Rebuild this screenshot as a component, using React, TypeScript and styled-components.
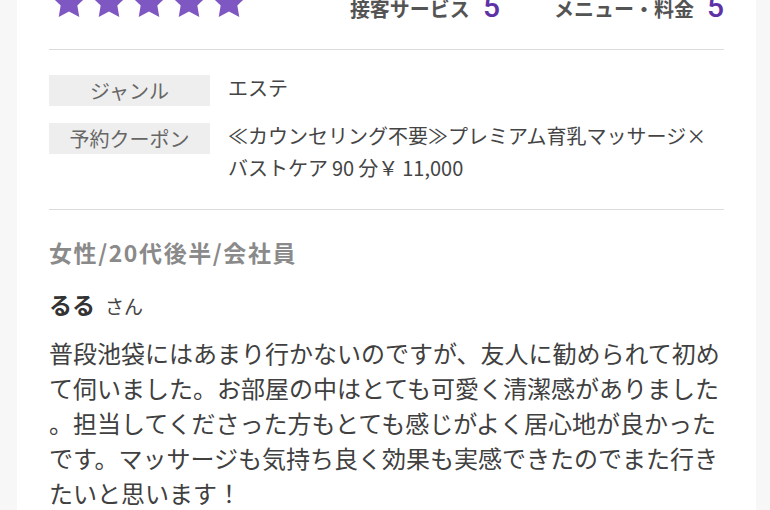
import React from "react";
import styled, { createGlobalStyle } from "styled-components";

const GlobalStyle = createGlobalStyle`
  body {
    margin: 0;
    background: #f7f7f7;
    font-family: "Noto Sans CJK JP", "Noto Sans", sans-serif;
  }
`;

//#region
const Page = styled.div`
  padding: 0 14px 0 17px;
  height: 510px;
  overflow: hidden;
`;

const Card = styled.div`
  background: #fff;
  padding: 0 32px 40px;
  min-height: 100%;
`;

const Header = styled.div`
  display: flex;
  justify-content: space-between;
  align-items: flex-end;
  margin-top: -18px;
  padding-bottom: 27px;
  border-bottom: 1px solid #dcdcdc;
`;

const Stars = styled.div`
  display: flex;
`;

const Ratings = styled.div`
  display: flex;
  gap: 54px;
  margin-bottom: 0;
`;

const Rating = styled.div`
  display: flex;
  align-items: baseline;
  gap: 13px;
`;

const RatingLabel = styled.span`
  font-size: 20px;
  font-weight: 700;
  color: #545454;
  line-height: 1;
`;

const RatingValue = styled.span`
  font-family: "Roboto", "Liberation Sans", sans-serif;
  font-size: 30px;
  font-weight: 500;
  color: #5e31a6;
  line-height: 1;
`;

const InfoTable = styled.div`
  display: grid;
  grid-template-columns: 161px 1fr;
  column-gap: 18px;
  row-gap: 17px;
  padding: 25px 0 25px;
  border-bottom: 1px solid #dcdcdc;
`;

const Label = styled.div`
  background: #eeeeee;
  height: 31px;
  display: flex;
  align-items: center;
  justify-content: center;
  font-size: 20px;
  color: #666;
`;

const Value = styled.div`
  font-size: 20px;
  line-height: 32px;
  color: #444;
  margin-top: -3px;
`;

const Attributes = styled.div`
  margin-top: 26px;
  font-size: 23px;
  font-weight: 700;
  letter-spacing: 1.6px;
  line-height: 32px;
  color: #8a8a8a;
`;

const Name = styled.div`
  margin-top: 20px;
  line-height: 32px;
  color: #333;
`;

const NameMain = styled.span`
  font-size: 23px;
  font-weight: 700;
`;

const Honorific = styled.span`
  font-size: 19px;
  color: #444;
  margin-left: 10px;
`;

const Body = styled.p`
  margin: 12px 0 0;
  font-size: 24px;
  line-height: 35px;
  color: #404040;
  line-break: anywhere;
`;
//#endregion

const Star = () => (
  <svg width="40" height="40" viewBox="0 0 24 24">
    <polygon
      fill="#7f57c2"
      points="12,2 15.09,8.26 22,9.27 17,14.14 18.18,21.02 12,17.77 5.82,21.02 7,14.14 2,9.27 8.91,8.26"
    />
  </svg>
);

const App = () => {
  return (
    <Page>
      <GlobalStyle />
      <Card>
        <Header>
          <Stars>
            {[0, 1, 2, 3, 4].map((i) => (
              <Star key={i} />
            ))}
          </Stars>
          <Ratings>
            <Rating>
              <RatingLabel>接客サービス</RatingLabel>
              <RatingValue>5</RatingValue>
            </Rating>
            <Rating>
              <RatingLabel>メニュー・料金</RatingLabel>
              <RatingValue>5</RatingValue>
            </Rating>
          </Ratings>
        </Header>

        <InfoTable>
          <Label>ジャンル</Label>
          <Value>エステ</Value>
          <Label>予約クーポン</Label>
          <Value>
            ≪カウンセリング不要≫プレミアム育乳マッサージ×バストケア{"\u2009"}90{"\u2009"}分￥{"\u2009"}11,000
          </Value>
        </InfoTable>

        <Attributes>女性/20代後半/会社員</Attributes>
        <Name>
          <NameMain>るる</NameMain>
          <Honorific>さん</Honorific>
        </Name>
        <Body>
          普段池袋にはあまり行かないのですが、友人に勧められて初めて伺いました。お部屋の中はとても可愛く清潔感がありました。担当してくださった方もとても感じがよく居心地が良かったです。マッサージも気持ち良く効果も実感できたのでまた行きたいと思います！
        </Body>
      </Card>
    </Page>
  );
};

export default App;
